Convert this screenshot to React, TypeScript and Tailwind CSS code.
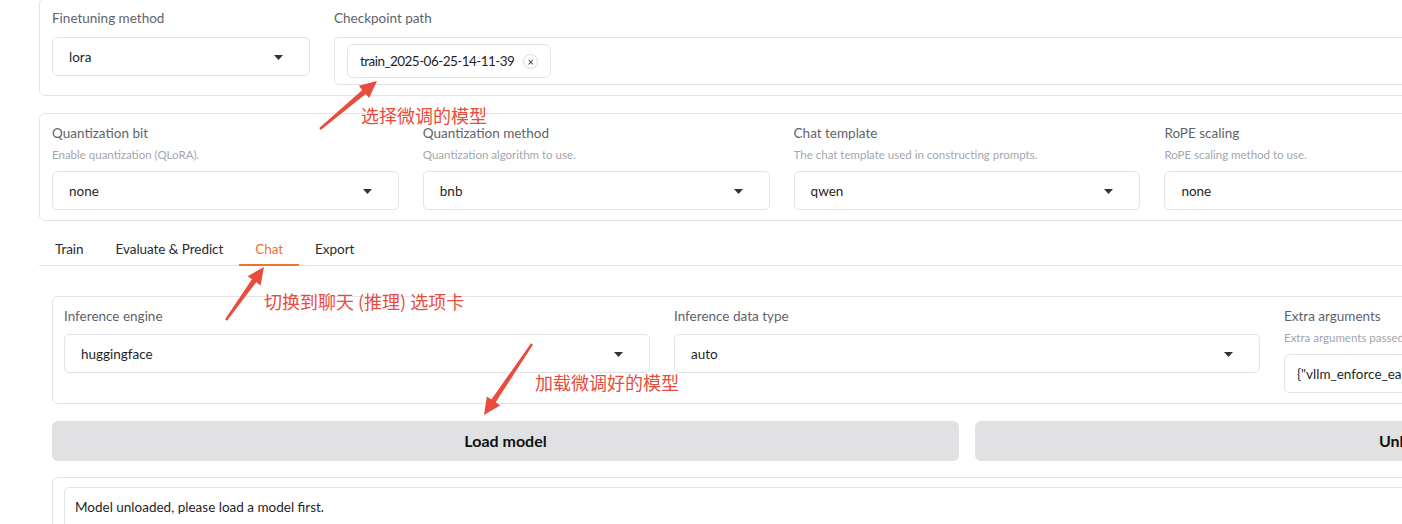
import React from "react"

const Caret = () => (
  <svg width="9" height="5" viewBox="0 0 9 5" className="shrink-0">
    <path d="M0 0H9L4.5 5Z" fill="#333" />
  </svg>
)

const Label = ({ children }: { children: React.ReactNode }) => (
  <div className="text-[13.5px] leading-5 text-[#5f636a] whitespace-nowrap">{children}</div>
)

const Info = ({ children }: { children: React.ReactNode }) => (
  <div className="mt-1 text-[11.5px] leading-4 text-[#a3a6ab] whitespace-nowrap overflow-hidden">{children}</div>
)

const Dropdown = ({ value, className = "" }: { value: string, className?: string }) => (
  <div className={"flex items-center justify-between h-[39px] rounded-[5px] border border-[#e3e4e8] bg-white pl-4 pr-[26px] pt-px text-[13.5px] text-[#1f1f1f] " + className}>
    <span>{value}</span>
    <Caret />
  </div>
)

const Field = ({ label, info, value, gap = "mt-2" }: { label: string, info?: string, value: string, gap?: string }) => (
  <div className="flex flex-col min-w-0">
    <Label>{label}</Label>
    {info && <Info>{info}</Info>}
    <Dropdown value={value} className={gap} />
  </div>
)

type Arrow = { x1: number, y1: number, x2: number, y2: number }

const arrows: Arrow[] = [
  { x1: 320, y1: 129, x2: 377, y2: 81 },
  { x1: 226, y1: 320, x2: 264, y2: 267 },
  { x1: 532, y1: 344, x2: 484, y2: 415 },
]

// tapered shaft + triangular head
const arrowPoints = ({ x1, y1, x2, y2 }: Arrow) => {
  const dx = x2 - x1
  const dy = y2 - y1
  const len = Math.hypot(dx, dy)
  const ux = dx / len
  const uy = dy / len
  const nx = -uy
  const ny = ux
  const head = 17
  const half = 8
  const tail = 1.2
  const neck = 2.6
  const bx = x2 - ux * head
  const by = y2 - uy * head
  const pts = [
    [x1 + nx * tail, y1 + ny * tail],
    [bx + nx * neck, by + ny * neck],
    [bx + nx * half, by + ny * half],
    [x2, y2],
    [bx - nx * half, by - ny * half],
    [bx - nx * neck, by - ny * neck],
    [x1 - nx * tail, y1 - ny * tail],
  ]
  return pts.map(p => p.join(",")).join(" ")
}

const tabs = ["Train", "Evaluate & Predict", "Chat", "Export"]

export default function App() {
  return (
    <div className="relative w-[1402px] h-[524px] overflow-hidden bg-white font-[Lato,'Noto_Sans_CJK_SC',sans-serif]">
      <div className="ml-[39px] w-[1856px] -mt-[2px]">
        {/* model row */}
        <div className="rounded-[6px] border border-[#e4e4e7] bg-white px-3 pt-[9px] pb-[10px]">
          <div className="grid grid-cols-[258px_1fr] gap-6 items-start">
            <Field label="Finetuning method" value="lora" gap="mt-[9px]" />
            <div className="flex flex-col">
              <Label>Checkpoint path</Label>
              <div className="mt-[9px] h-[48px] rounded-[5px] border border-[#e3e4e8] pl-3 pt-[6px]">
                <div className="inline-flex items-center h-[34px] rounded-[6px] border border-[#e3e4e8] px-3 text-[13.5px] tracking-[-0.55px] text-[#1f1f1f]">
                  <span>train_2025-06-25-14-11-39</span>
                  <span className="ml-[9px] flex items-center justify-center w-[15px] h-[15px] rounded-full border border-[#d9dadd] text-[11px] leading-none tracking-normal text-[#333]">×</span>
                </div>
              </div>
            </div>
          </div>
        </div>

        {/* advanced row */}
        <div className="mt-[17px] rounded-[6px] border border-[#e4e4e7] bg-white px-3 pt-[9px] pb-[10px]">
          <div className="grid grid-cols-5 gap-6">
            <Field label="Quantization bit" info="Enable quantization (QLoRA)." value="none" />
            <Field label="Quantization method" info="Quantization algorithm to use." value="bnb" />
            <Field label="Chat template" info="The chat template used in constructing prompts." value="qwen" />
            <Field label="RoPE scaling" info="RoPE scaling method to use." value="none" />
            <Field label="Booster" info="Approach used to boost training speed." value="auto" />
          </div>
        </div>

        {/* tabs */}
        <div className="mt-3 flex h-[33px] border-b border-[#e4e4e7]">
          {tabs.map(t => (
            <div
              key={t}
              className={
                t === "Chat"
                  ? "h-[33px] px-4 pt-[6px] -mb-px border-b-2 border-[#f0722d] text-[13.5px] tracking-[-0.05px] text-[#f0722d]"
                  : "h-[33px] px-4 pt-[6px] -mb-px border-b-2 border-transparent text-[13.5px] tracking-[-0.05px] text-[#2b2b2b]"
              }
            >
              {t}
            </div>
          ))}
        </div>

        <div className="px-[13px] pt-[30px]">
          <div className="rounded-[6px] border border-[#e4e4e7] bg-white px-[11px] pt-[9px] pb-[10px]">
            <div className="grid grid-cols-3 gap-6 items-start">
              <Field label="Inference engine" value="huggingface" />
              <Field label="Inference data type" value="auto" />
              <div className="flex flex-col min-w-0">
                <Label>Extra arguments</Label>
                <Info>Extra arguments passed to the inference engine in JSON format.</Info>
                <div className="mt-2 flex items-center h-[39px] rounded-[5px] border border-[#e3e4e8] pl-3 pt-px text-[13.5px] text-[#1f1f1f] whitespace-nowrap overflow-hidden">
                  {'{"vllm_enforce_eager": true}'}
                </div>
              </div>
            </div>
          </div>

          <div className="mt-[17px] grid grid-cols-2 gap-4">
            <button className="h-[40px] rounded-[6px] bg-[#e1e1e4] text-[16px] font-bold text-[#111]">Load model</button>
            <button className="h-[40px] rounded-[6px] bg-[#e1e1e4] text-[16px] font-bold text-[#111]">Unload model</button>
          </div>

          <div className="mt-4 h-[80px] rounded-[6px] border border-[#e4e4e7] bg-white px-[11px] pt-[9px]">
            <div className="h-[60px] rounded-[5px] border border-[#e3e4e8] pl-[10px] pt-[9px] text-[13.5px] leading-5 text-[#1f1f1f]">
              Model unloaded, please load a model first.
            </div>
          </div>
        </div>
      </div>

      {/* annotations */}
      <svg className="absolute inset-0 pointer-events-none" width="1402" height="524">
        {arrows.map((a, i) => (
          <polygon key={i} points={arrowPoints(a)} fill="#e84c3d" />
        ))}
      </svg>
      <div className="absolute left-[361px] top-[103px] text-[18px] leading-6 text-[#e84c3d] font-['Noto_Sans_CJK_SC',sans-serif] whitespace-nowrap">选择微调的模型</div>
      <div className="absolute left-[264px] top-[289px] text-[18px] leading-6 text-[#e84c3d] font-['Noto_Sans_CJK_SC',sans-serif] whitespace-nowrap">切换到聊天 (推理) 选项卡</div>
      <div className="absolute left-[535px] top-[370px] text-[18px] leading-6 text-[#e84c3d] font-['Noto_Sans_CJK_SC',sans-serif] whitespace-nowrap">加载微调好的模型</div>
    </div>
  )
}
